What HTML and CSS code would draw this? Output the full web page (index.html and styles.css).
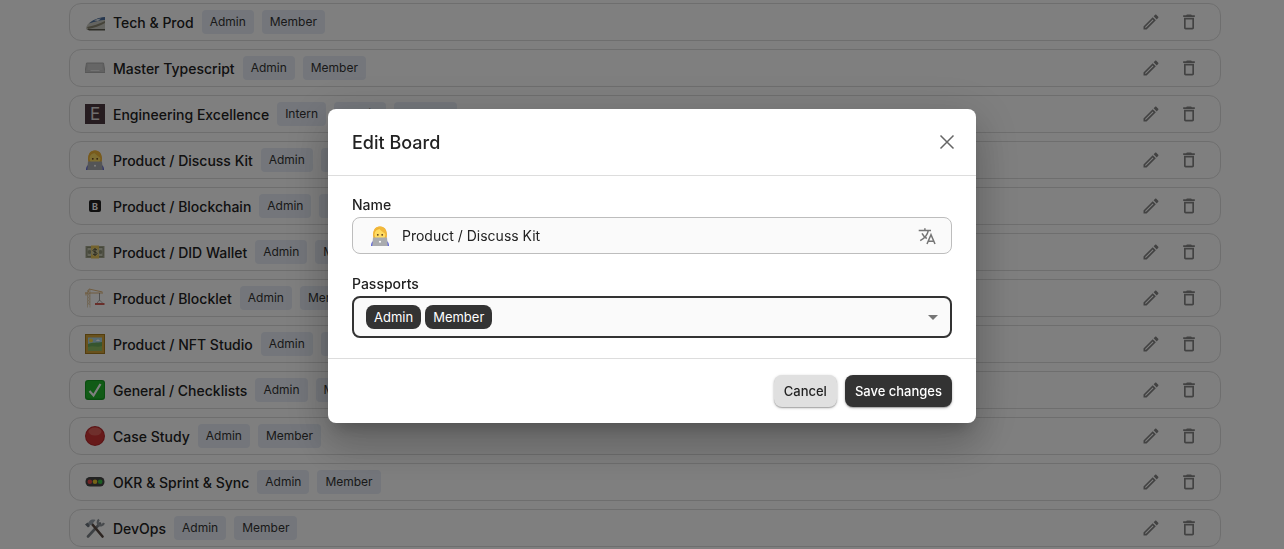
FILE: index.html
```html
<!DOCTYPE html>
<html lang="en">
<head>
    <meta charset="utf-8">
    <title>Boards</title>
    <link rel="stylesheet" href="styles.css">
</head>
<body>
    <!-- shared icons -->
    <svg class="sprite" aria-hidden="true">
        <symbol id="edit" viewBox="0 0 24 24">
            <path d="M14.06 9.02l.92.92L5.92 19H5v-.92l9.06-9.06M17.66 3c-.25 0-.51.1-.7.29l-1.83 1.83 3.75 3.75 1.83-1.83c.39-.39.39-1.02 0-1.41l-2.34-2.34c-.2-.2-.45-.29-.71-.29zm-3.6 3.19L3 17.25V21h3.75L17.81 9.94l-3.75-3.75z"/>
        </symbol>
        <symbol id="trash" viewBox="0 0 24 24">
            <path d="M6 19c0 1.1.9 2 2 2h8c1.1 0 2-.9 2-2V7H6v12zM8 9h8v10H8V9zm7.5-5l-1-1h-5l-1 1H5v2h14V4z"/>
        </symbol>
        <symbol id="coder" viewBox="0 0 20 20">
            <path d="M1 20c0-3 1-5 4-6h10c3 1 4 3 4 6z" fill="#5a62d8"/>
            <path d="M3.500 13C2 6 4 .5 10 .5S18 6 16.500 13z" fill="#eeb034"/>
            <ellipse cx="10" cy="8.500" rx="5.500" ry="5.500" fill="#ffdc62"/>
            <path d="M3.800 9C4 4 6.500 2 9 2c1 2.500 4 4 7.200 6.500C16.500 3.500 13.500.5 10 .5 5.500.5 3 4 3.800 9z" fill="#f2b93b"/>
            <circle cx="7.800" cy="8.800" r=".9" fill="#5b3b1d"/>
            <circle cx="12.200" cy="8.800" r=".9" fill="#5b3b1d"/>
            <path d="M3 11.500h14l.8 8.500H2.200z" fill="#a9abae"/>
            <circle cx="10" cy="15.800" r="1" fill="#fff"/>
        </symbol>
    </svg>

    <main class="page">
        <ul class="boards">
            <li class="board">
                <svg class="emoji" viewBox="0 0 20 20" aria-hidden="true">
                    <path d="M1 16C2 11 9 6 20 5.500V18H3c-1.500 0-2-.8-2-2z" fill="#c9c9c0"/>
                    <path d="M4 11.500C8 8 13 5.500 20 5v3c-5 0-9 1.500-16 3.500z" fill="#4c6f9f"/>
                    <path d="M9 8.500c2-1.300 5-2 7-2l-3 2.500z" fill="#dfe7ee"/>
                    <path d="M2 15c6-1 12-3 18-6v2c-5 3-11 5-17 6z" fill="#8b8773"/>
                    <path d="M2 17h18v1.500H4z" fill="#5d5a4e"/>
                </svg>
                <span class="name">Tech &amp; Prod</span>
                <span class="tag">Admin</span><span class="tag">Member</span>
                <span class="actions">
                    <button class="icon-btn" aria-label="Edit"><svg><use href="#edit"/></svg></button>
                    <button class="icon-btn" aria-label="Delete"><svg><use href="#trash"/></svg></button>
                </span>
            </li>
            <li class="board">
                <svg class="emoji" viewBox="0 0 20 20" aria-hidden="true">
                    <path d="M1.500 5h17L20 14.500H0z" fill="#c4c4c4" stroke="#b0b0b0"/>
                    <path d="M3 7h14M2.800 9h14.400M2.500 11h15" stroke="#d6d6d6"/>
                    <path d="M5.500 12.500h9" stroke="#e6e6e6"/>
                </svg>
                <span class="name">Master Typescript</span>
                <span class="tag">Admin</span><span class="tag">Member</span>
                <span class="actions">
                    <button class="icon-btn" aria-label="Edit"><svg><use href="#edit"/></svg></button>
                    <button class="icon-btn" aria-label="Delete"><svg><use href="#trash"/></svg></button>
                </span>
            </li>
            <li class="board">
                <span class="emoji letter">E</span>
                <span class="name">Engineering Excellence</span>
                <span class="tag">Intern</span><span class="tag">Admin</span><span class="tag">Member</span>
                <span class="actions">
                    <button class="icon-btn" aria-label="Edit"><svg><use href="#edit"/></svg></button>
                    <button class="icon-btn" aria-label="Delete"><svg><use href="#trash"/></svg></button>
                </span>
            </li>
            <li class="board">
                <svg class="emoji" aria-hidden="true"><use href="#coder"/></svg>
                <span class="name">Product / Discuss Kit</span>
                <span class="tag">Admin</span><span class="tag">Member</span>
                <span class="actions">
                    <button class="icon-btn" aria-label="Edit"><svg><use href="#edit"/></svg></button>
                    <button class="icon-btn" aria-label="Delete"><svg><use href="#trash"/></svg></button>
                </span>
            </li>
            <li class="board">
                <span class="emoji letter small">B</span>
                <span class="name">Product / Blockchain</span>
                <span class="tag">Admin</span><span class="tag">Member</span>
                <span class="actions">
                    <button class="icon-btn" aria-label="Edit"><svg><use href="#edit"/></svg></button>
                    <button class="icon-btn" aria-label="Delete"><svg><use href="#trash"/></svg></button>
                </span>
            </li>
            <li class="board">
                <svg class="emoji" viewBox="0 0 20 20" aria-hidden="true">
                    <path d="M.5 4h19v12H.5z" fill="#a4a78c"/>
                    <path d="M2 5.500h16v9H2z" fill="#c9cbb4" stroke="#8b8f74"/>
                    <circle cx="4.500" cy="10" r="2" fill="#8f9379"/>
                    <circle cx="15.500" cy="10" r="2" fill="#8f9379"/>
                    <path d="M6 3.500h8v13H6z" fill="#e9c75a"/>
                    <circle cx="10" cy="10" r="3.800" fill="#d5cf9e"/>
                    <path d="M12 8c-1-1.200-4-1-4 .5S12 10 12 11.500s-3 1.800-4 .5M10 6v8" stroke="#59543a" fill="none"/>
                </svg>
                <span class="name">Product / DID Wallet</span>
                <span class="tag">Admin</span><span class="tag">Member</span>
                <span class="actions">
                    <button class="icon-btn" aria-label="Edit"><svg><use href="#edit"/></svg></button>
                    <button class="icon-btn" aria-label="Delete"><svg><use href="#trash"/></svg></button>
                </span>
            </li>
            <li class="board">
                <svg class="emoji" viewBox="0 0 20 20" fill="none" aria-hidden="true">
                    <path d="M2.500 2v17.500M5 2v17.500M2.500 5L5 8l-2.500 3L5 14l-2.500 3M5 5L2.500 8 5 11l-2.500 3L5 17" stroke="#dcc49c" stroke-width=".7"/>
                    <path d="M0 5h18M3.500 4L4 1l13.500 3M1 4.500v3" stroke="#dcae6c" stroke-width=".9"/>
                    <path d="M14.500 5v8" stroke="#888" stroke-width=".8"/>
                    <path d="M12 15l2.500-3 3 3" stroke="#999" stroke-width=".8"/>
                    <path d="M10 16h9.500" stroke="#c8372d" stroke-width="1.600"/>
                </svg>
                <span class="name">Product / Blocklet</span>
                <span class="tag">Admin</span><span class="tag">Member</span>
                <span class="actions">
                    <button class="icon-btn" aria-label="Edit"><svg><use href="#edit"/></svg></button>
                    <button class="icon-btn" aria-label="Delete"><svg><use href="#trash"/></svg></button>
                </span>
            </li>
            <li class="board">
                <svg class="emoji" viewBox="0 0 20 20" aria-hidden="true">
                    <path d="M0 0h20v20H0z" fill="#a67a1c"/>
                    <path d="M1 1h18v18H1z" fill="#d3a43a"/>
                    <path d="M3 3.500h14v13H3z" fill="#a9d3e2"/>
                    <path d="M3 10c4-2 9-1 14-2v8.500H3z" fill="#6cab5c"/>
                    <path d="M3 13c5-2 9 1 14-1v4.500H3z" fill="#8fbf62"/>
                    <circle cx="6" cy="6.500" r="2" fill="#f4d848"/>
                    <path d="M11 7c1-2 3-2 4 0z" fill="#fff"/>
                </svg>
                <span class="name">Product / NFT Studio</span>
                <span class="tag">Admin</span><span class="tag">Member</span>
                <span class="actions">
                    <button class="icon-btn" aria-label="Edit"><svg><use href="#edit"/></svg></button>
                    <button class="icon-btn" aria-label="Delete"><svg><use href="#trash"/></svg></button>
                </span>
            </li>
            <li class="board">
                <svg class="emoji" viewBox="0 0 20 20" aria-hidden="true">
                    <rect width="20" height="20" rx="3" fill="#159a20"/>
                    <rect x="1" y="1" width="18" height="17.500" rx="2.500" fill="#22b72c"/>
                    <path d="M4.500 11l4 4.500L15.500 4" fill="none" stroke="#fff" stroke-width="2.200"/>
                </svg>
                <span class="name">General / Checklists</span>
                <span class="tag">Admin</span><span class="tag">Member</span>
                <span class="actions">
                    <button class="icon-btn" aria-label="Edit"><svg><use href="#edit"/></svg></button>
                    <button class="icon-btn" aria-label="Delete"><svg><use href="#trash"/></svg></button>
                </span>
            </li>
            <li class="board">
                <svg class="emoji" viewBox="0 0 20 20" aria-hidden="true">
                    <circle cx="10" cy="10" r="10" fill="#b3262a"/>
                    <circle cx="10" cy="10" r="9" fill="#cf3535"/>
                    <ellipse cx="10" cy="5.500" rx="6.500" ry="4" fill="#de5f58"/>
                </svg>
                <span class="name">Case Study</span>
                <span class="tag">Admin</span><span class="tag">Member</span>
                <span class="actions">
                    <button class="icon-btn" aria-label="Edit"><svg><use href="#edit"/></svg></button>
                    <button class="icon-btn" aria-label="Delete"><svg><use href="#trash"/></svg></button>
                </span>
            </li>
            <li class="board">
                <svg class="emoji" viewBox="0 0 20 20" aria-hidden="true">
                    <rect x=".5" y="5" width="19" height="9.500" rx="4.500" fill="#444"/>
                    <circle cx="4.800" cy="9.800" r="2.300" fill="#e5484a"/>
                    <circle cx="10" cy="9.800" r="2.300" fill="#eac62c"/>
                    <circle cx="15.200" cy="9.800" r="2.300" fill="#37bd45"/>
                </svg>
                <span class="name">OKR &amp; Sprint &amp; Sync</span>
                <span class="tag">Admin</span><span class="tag">Member</span>
                <span class="actions">
                    <button class="icon-btn" aria-label="Edit"><svg><use href="#edit"/></svg></button>
                    <button class="icon-btn" aria-label="Delete"><svg><use href="#trash"/></svg></button>
                </span>
            </li>
            <li class="board">
                <svg class="emoji" viewBox="0 0 20 20" fill="none" aria-hidden="true">
                    <path d="M15 5.500L3 18.500" stroke="#7d8389" stroke-width="2.600" stroke-linecap="round"/>
                    <path d="M14 1.500c-2 2-1.500 4.500 0 5.500s4 .5 5-2" stroke="#8f959b" stroke-width="2.200"/>
                    <path d="M7 6l10.500 12.500" stroke="#5a4a42" stroke-width="2.600" stroke-linecap="round"/>
                    <path d="M1 7.500L4.500 3c2-1.800 4-1.500 6-1L6.500 7z" fill="#9aa4ae"/>
                    <path d="M0 6.500l2.500-2L5 8 3 9.500z" fill="#6c757e"/>
                </svg>
                <span class="name">DevOps</span>
                <span class="tag">Admin</span><span class="tag">Member</span>
                <span class="actions">
                    <button class="icon-btn" aria-label="Edit"><svg><use href="#edit"/></svg></button>
                    <button class="icon-btn" aria-label="Delete"><svg><use href="#trash"/></svg></button>
                </span>
            </li>
        </ul>
    </main>

    <div class="overlay">
        <form class="dialog" role="dialog" aria-labelledby="dialog-title">
            <header class="dialog-header">
                <h2 id="dialog-title">Edit Board</h2>
                <button type="button" class="close" aria-label="Close">
                    <svg viewBox="0 0 16 16"><path d="M1.500 1.500l13 13M14.500 1.500l-13 13"/></svg>
                </button>
            </header>
            <div class="dialog-body">
                <div class="field">
                    <label for="board-name">Name</label>
                    <div class="text-box">
                        <svg class="emoji" aria-hidden="true"><use href="#coder"/></svg>
                        <input id="board-name" type="text" value="Product / Discuss Kit">
                        <button type="button" class="translate" aria-label="Translate">
                            <svg viewBox="0 0 18 18">
                                <path d="M.7 3.600h12.300M6.900 1.200v2.400M10.300 3.600C9.500 7.500 6.500 11.300 2.200 13.700M4 6.300c1 2 2.600 3.800 4.800 5.200"/>
                                <path d="M9 17l4-9.300L17 17M10.200 14.200h5.600"/>
                            </svg>
                        </button>
                    </div>
                </div>
                <div class="field">
                    <label for="passports">Passports</label>
                    <div class="select-box">
                        <select id="passports">
                            <option value="" selected></option>
                            <option>Admin</option>
                            <option>Member</option>
                            <option>Intern</option>
                        </select>
                        <div class="chips">
                            <span class="chip">Admin</span>
                            <span class="chip">Member</span>
                            <svg class="arrow" viewBox="0 0 10 5" aria-hidden="true"><path d="M0 0h10L5 5z"/></svg>
                        </div>
                    </div>
                </div>
            </div>
            <footer class="dialog-footer">
                <button type="button" class="btn cancel">Cancel</button>
                <button type="submit" class="btn save">Save changes</button>
            </footer>
        </form>
    </div>
</body>
</html>
```
FILE: styles.css
```css
* {
    box-sizing: border-box;
}

body {
    margin: 0;
    height: 100vh;
    overflow: hidden;
    background: #fff;
    color: #222;
    font-family: Inter, "Liberation Sans", sans-serif;
    font-size: 14px;
}

button, input, select {
    font: inherit;
    color: inherit;
}

button {
    border: 0;
    padding: 0;
    background: none;
    cursor: pointer;
}

.sprite {
    display: none;
}

/* board list */
.page {
    padding: 3px 63px 0 69px;
}

.boards {
    display: flex;
    flex-direction: column;
    gap: 8px;
    margin: 0;
    padding: 0;
    list-style: none;
}

.board {
    display: flex;
    align-items: center;
    gap: 8px;
    height: 38px;
    padding: 0 15px;
    border: 1px solid #ddd;
    border-radius: 12px;
}

.emoji {
    flex: none;
    width: 20px;
    height: 20px;
}

.letter {
    display: flex;
    align-items: center;
    justify-content: center;
    background: #4c3840;
    color: #e0dcdc;
    font-size: 17px;
}

.letter.small {
    width: 12px;
    height: 12px;
    margin: 0 4px;
    border-radius: 2px;
    background: #222;
    color: #fff;
    font-size: 9px;
    font-weight: 700;
}

.name {
    padding-top: 2px;
    font-weight: 500;
    line-height: 20px;
}

.tag {
    padding: 0 8px;
    border-radius: 4px;
    background: #e8edf6;
    color: #333;
    font-size: 12px;
    line-height: 24px;
}

.actions {
    display: flex;
    gap: 6px;
    margin-left: auto;
}

.icon-btn {
    display: flex;
    align-items: center;
    justify-content: center;
    width: 32px;
    height: 32px;
}

.icon-btn svg {
    width: 20px;
    height: 20px;
    fill: #858585;
}

/* dialog */
.overlay {
    position: fixed;
    inset: 0;
    display: flex;
    align-items: center;
    justify-content: center;
    padding: 0 0 17px 20px;
    background: rgba(0, 0, 0, 0.5);
}

.dialog {
    width: 100%;
    max-width: 648px;
    border-radius: 8px;
    background: #fff;
    box-shadow: 0 11px 15px -7px rgba(0, 0, 0, 0.2),
        0 24px 38px 3px rgba(0, 0, 0, 0.14),
        0 9px 46px 8px rgba(0, 0, 0, 0.12);
}

.dialog-header {
    display: flex;
    align-items: center;
    justify-content: space-between;
    height: 67px;
    padding: 0 20px 0 24px;
    border-bottom: 1px solid #ddd;
}

.dialog-header h2 {
    margin: 0;
    font-size: 18px;
    font-weight: 500;
}

.close {
    display: flex;
    padding: 1px;
}

.close svg {
    width: 16px;
    height: 16px;
    fill: none;
    stroke: #666;
    stroke-width: 1.500;
}

.dialog-body {
    display: flex;
    flex-direction: column;
    gap: 20px;
    padding: 19px 24px 20px;
}

.field {
    display: flex;
    flex-direction: column;
    gap: 2px;
}

.field label {
    font-weight: 500;
    line-height: 20px;
}

.text-box {
    display: flex;
    align-items: center;
    gap: 12px;
    height: 37px;
    padding: 0 15px 0 17px;
    border: 1px solid #bdbdbd;
    border-radius: 8px;
    background: #fafafa;
}

.text-box input {
    flex: 1;
    min-width: 0;
    padding: 0;
    border: 0;
    outline: 0;
    background: none;
}

.translate {
    display: flex;
}

.translate svg {
    width: 18px;
    height: 18px;
    fill: none;
    stroke: #757575;
    stroke-width: 1.500;
}

/* the chips share one grid cell with the select */
.select-box {
    display: grid;
    height: 42px;
}

.select-box select,
.chips {
    grid-area: 1 / 1;
}

.select-box select {
    appearance: none;
    width: 100%;
    border: 2px solid #333;
    border-radius: 8px;
    outline: 0;
    background: #fafafa;
}

.chips {
    z-index: 1;
    display: flex;
    align-items: center;
    gap: 4px;
    padding: 0 14px;
    pointer-events: none;
}

.chip {
    padding: 0 8px;
    border-radius: 8px;
    background: #333;
    color: #fff;
    font-size: 13px;
    line-height: 24px;
}

.arrow {
    width: 10px;
    height: 5px;
    margin-left: auto;
    fill: #757575;
}

.dialog-footer {
    display: flex;
    justify-content: flex-end;
    gap: 8px;
    padding: 16px 24px;
    border-top: 1px solid #ddd;
}

.btn {
    height: 32px;
    padding: 0 10px;
    border-radius: 8px;
    font-size: 13px;
    font-weight: 500;
    box-shadow: 0 1px 3px rgba(0, 0, 0, 0.25), 0 1px 1px rgba(0, 0, 0, 0.2);
}

.cancel {
    background: #e0e0e0;
}

.save {
    background: #333;
    color: #fff;
}
```
